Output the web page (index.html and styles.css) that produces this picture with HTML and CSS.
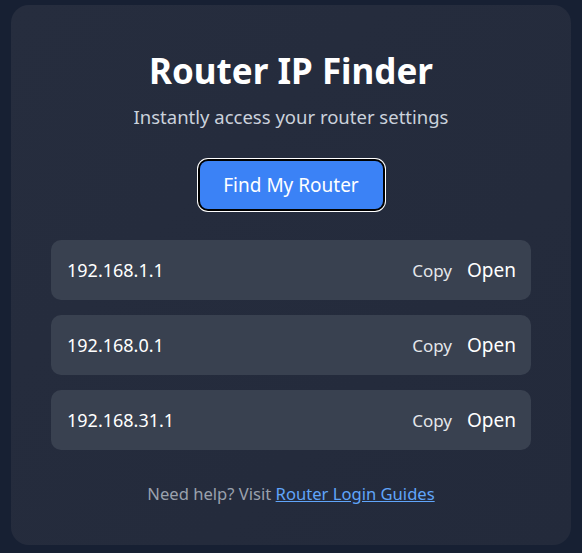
FILE: index.html
```html
<!DOCTYPE html>
<html lang="en">
<head>
<meta charset="utf-8">
<title>Router IP Finder</title>
<link rel="stylesheet" href="styles.css">
</head>
<body>
<main class="card">
  <h1 class="title">Router IP Finder</h1>
  <p class="subtitle">Instantly access your router settings</p>
  <button class="find-btn" type="button">Find My Router</button>
  <ul class="ip-list">
    <li class="ip-row"><span class="ip">192.168.1.1</span><span class="actions"><span class="copy">Copy</span><span class="open">Open</span></span></li>
    <li class="ip-row"><span class="ip">192.168.0.1</span><span class="actions"><span class="copy">Copy</span><span class="open">Open</span></span></li>
    <li class="ip-row"><span class="ip">192.168.31.1</span><span class="actions"><span class="copy">Copy</span><span class="open">Open</span></span></li>
  </ul>
  <p class="help">Need help? Visit <a href="#" class="help-link">Router Login Guides</a></p>
</main>
</body>
</html>
```
FILE: styles.css
```css
* { box-sizing: border-box; }
html, body { height: 100%; }
body {
  margin: 0;
  background: #172033;
  font-family: "Noto Sans", "Open Sans", sans-serif;
  display: flex;
  justify-content: center;
  align-items: flex-start;
  padding-top: 5px;
}
.card {
  width: 560px;
  height: 540px;
  background: linear-gradient(135deg, #262d3e 0%, #232a3b 100%);
  border-radius: 18px;
  padding: 44px 40px 0;
  display: flex;
  flex-direction: column;
  align-items: center;
}
.title {
  margin: 0;
  font-size: 35px;
  line-height: 44px;
  font-weight: 700;
  color: #ffffff;
}
.subtitle {
  margin: 11px 0 0;
  font-size: 18.5px;
  line-height: 26px;
  color: #cbd2dc;
}
.find-btn {
  margin-top: 31px;
  width: 183px;
  height: 48px;
  background: #3b82f6;
  color: #ffffff;
  border: none;
  border-radius: 8px;
  font-family: inherit;
  font-size: 19px;
  box-shadow: 0 0 0 2px #000, 0 0 0 3px #fff;
  outline: none;
}
.ip-list {
  list-style: none;
  margin: 31px 0 0;
  padding: 0;
  width: 100%;
  display: flex;
  flex-direction: column;
  gap: 15px;
}
.ip-row {
  height: 60px;
  background: #394150;
  border-radius: 10px;
  padding: 0 15px 0 16px;
  display: flex;
  align-items: center;
  justify-content: space-between;
}
.ip {
  font-size: 18px;
  color: #ffffff;
}
.actions {
  display: flex;
  align-items: center;
  gap: 15px;
}
.copy {
  font-size: 17px;
  color: #e4e6ea;
}
.open {
  font-size: 19px;
  color: #ffffff;
}
.help {
  margin: 32px 0 0;
  font-size: 16.6px;
  line-height: 24px;
  color: #9aa1ad;
}
.help-link {
  color: #60a5fa;
  text-decoration: underline;
}
```
